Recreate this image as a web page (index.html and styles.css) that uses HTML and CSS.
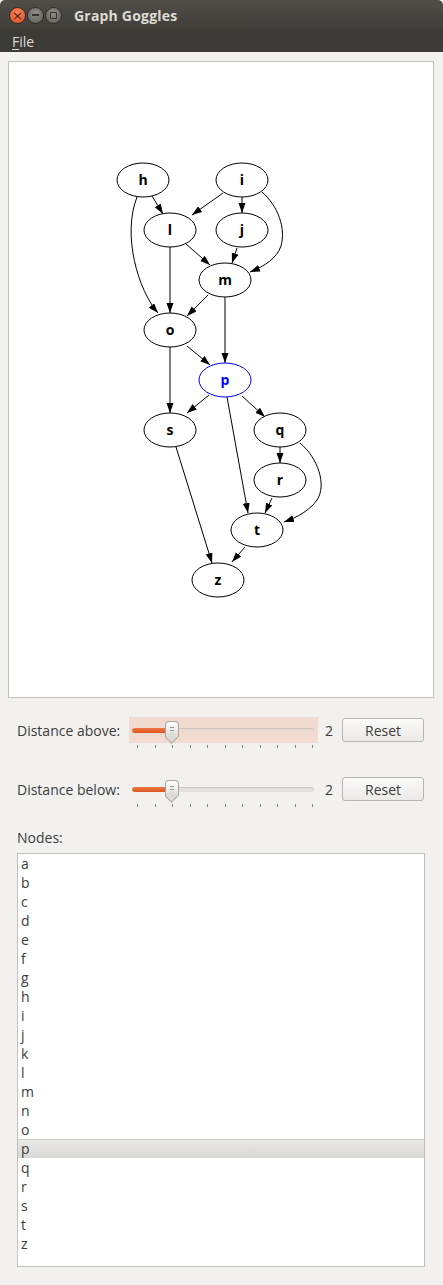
FILE: index.html
```html
<!DOCTYPE html>
<html lang="en">
  <head>
    <meta charset="UTF-8" />
    <title>Graph Goggles</title>
    <link rel="stylesheet" href="styles.css">
  </head>
  <body>
    <div class="window">
      <!-- Title bar with window buttons -->
      <header class="titlebar">
        <div class="win-buttons">
          <span class="win-btn close">&#215;</span>
          <span class="win-btn minimize"><i class="min-bar"></i></span>
          <span class="win-btn maximize"><i class="max-box"></i></span>
        </div>
        <span class="title">Graph Goggles</span>
      </header>

      <nav class="menubar">
        <span class="menu-item"><u>F</u>ile</span>
      </nav>

      <main class="content">
        <!-- Graph view -->
        <div class="graph-frame">
          <svg class="graph" width="424" height="635" viewBox="9 62 424 635">
            <defs>
              <marker id="arrow" markerUnits="userSpaceOnUse" markerWidth="10" markerHeight="8"
                      refX="10" refY="3.5" orient="auto">
                <path d="M0,0 L10,3.5 L0,7 z" fill="#000" />
              </marker>
            </defs>

            <g class="edges" marker-end="url(#arrow)">
              <path d="M152,196 L163,214" />
              <path d="M137,197 C122,235 138,290 158,313" />
              <path d="M223,193 L192,215" />
              <path d="M242,197 L242,213" />
              <path d="M262,192 C278,206 286,228 281,246 C277,258 265,266 250,272" />
              <path d="M186,244 L210,265" />
              <path d="M170,247 L170,313" />
              <path d="M237,248 L232,263" />
              <path d="M208,295 L187,316" />
              <path d="M225,297 L225,363" />
              <path d="M187,346 L210,365" />
              <path d="M170,347 L170,413" />
              <path d="M209,395 L187,413" />
              <path d="M242,396 L265,417" />
              <path d="M227,397 L248,513" />
              <path d="M280,447 L280,463" />
              <path d="M300,443 C318,458 327,485 317,500 C310,510 298,517 284,522" />
              <path d="M272,498 L265,513" />
              <path d="M176,447 L212,563" />
              <path d="M245,547 L232,562" />
            </g>

            <g class="nodes">
              <ellipse cx="143" cy="180" rx="26" ry="17" /><text x="143" y="185">h</text>
              <ellipse cx="242" cy="180" rx="26" ry="17" /><text x="242" y="185">i</text>
              <ellipse cx="170" cy="230" rx="26" ry="17" /><text x="170" y="235">l</text>
              <ellipse cx="242" cy="230" rx="26" ry="17" /><text x="242" y="235">j</text>
              <ellipse cx="225" cy="280" rx="26" ry="17" /><text x="225" y="285">m</text>
              <ellipse cx="170" cy="330" rx="26" ry="17" /><text x="170" y="335">o</text>
              <ellipse class="current" cx="225" cy="380" rx="26" ry="17" /><text class="current" x="225" y="385">p</text>
              <ellipse cx="170" cy="430" rx="26" ry="17" /><text x="170" y="435">s</text>
              <ellipse cx="280" cy="430" rx="26" ry="17" /><text x="280" y="435">q</text>
              <ellipse cx="280" cy="480" rx="26" ry="17" /><text x="280" y="485">r</text>
              <ellipse cx="257" cy="530" rx="26" ry="17" /><text x="257" y="535">t</text>
              <ellipse cx="218" cy="580" rx="26" ry="17" /><text x="218" y="585">z</text>
            </g>
          </svg>
        </div>

        <!-- Distance controls -->
        <div class="distance-row">
          <span class="distance-label">Distance above:</span>
          <div class="slider-box">
            <div class="slider hot" style="--pos: 0.2">
              <div class="groove"><div class="groove-fill"></div></div>
              <div class="thumb"><i></i><i></i><i></i></div>
            </div>
            <div class="ticks">
              <span></span><span></span><span></span><span></span><span></span><span></span>
              <span></span><span></span><span></span><span></span><span></span>
            </div>
          </div>
          <span class="distance-value">2</span>
          <button class="reset-btn">Reset</button>
        </div>

        <div class="distance-row">
          <span class="distance-label">Distance below:</span>
          <div class="slider-box">
            <div class="slider" style="--pos: 0.2">
              <div class="groove"><div class="groove-fill"></div></div>
              <div class="thumb"><i></i><i></i><i></i></div>
            </div>
            <div class="ticks">
              <span></span><span></span><span></span><span></span><span></span><span></span>
              <span></span><span></span><span></span><span></span><span></span>
            </div>
          </div>
          <span class="distance-value">2</span>
          <button class="reset-btn">Reset</button>
        </div>

        <!-- Node list -->
        <div class="nodes-label">Nodes:</div>
        <ul class="node-list">
          <li>a</li><li>b</li><li>c</li><li>d</li><li>e</li><li>f</li><li>g</li>
          <li>h</li><li>i</li><li>j</li><li>k</li><li>l</li><li>m</li><li>n</li>
          <li>o</li><li class="selected">p</li><li>q</li><li>r</li><li>s</li><li>t</li>
          <li>z</li>
        </ul>
      </main>
    </div>
  </body>
</html>
```

FILE: styles.css
```css
/* Base page */
body {
  margin: 0;
  background-color: #f2f1f0;
  font-family: "Open Sans", "DejaVu Sans", sans-serif;
  font-size: 14px;
  color: #3c3c3c;
}

.window {
  width: 443px;
  height: 1285px;
  background-color: #f2f1f0;
  overflow: hidden;
}

/* Title bar */
.titlebar {
  height: 30px;
  display: flex;
  align-items: center;
  background: linear-gradient(#4f4e49, #3e3d39);
  border-radius: 5px 5px 0 0;
}

.win-buttons {
  display: flex;
  align-items: center;
  gap: 1px;
  margin-left: 9px;
}

.win-btn {
  width: 17px;
  height: 17px;
  border-radius: 50%;
  display: flex;
  align-items: center;
  justify-content: center;
  box-sizing: border-box;
  border: 1px solid #2e2d2a;
}

.win-btn.close {
  background: radial-gradient(circle at 50% 35%, #f6875c, #df4a1b);
  color: #4a1a08;
  font-size: 13px;
  line-height: 1;
  font-family: "DejaVu Sans", sans-serif;
}

.win-btn.minimize,
.win-btn.maximize {
  background: radial-gradient(circle at 50% 35%, #8d8c86, #5e5d58);
}

.min-bar {
  width: 7px;
  height: 2px;
  background-color: #34332f;
}

.max-box {
  width: 5px;
  height: 5px;
  border: 1.5px solid #34332f;
  border-radius: 1px;
}

.title {
  margin-left: 12px;
  font-weight: bold;
  font-size: 14px;
  color: #dfdbd2;
  letter-spacing: 0.2px;
}

/* Menu bar */
.menubar {
  height: 22px;
  display: flex;
  align-items: center;
  background-color: #3c3b37;
}

.menu-item {
  margin-left: 12px;
  color: #dfdbd2;
  font-size: 14px;
}

.menu-item u {
  text-underline-offset: 2px;
}

/* Main content */
.content {
  padding: 9px 9px 0 8px;
}

.graph-frame {
  height: 635px;
  background-color: #fff;
  border: 1px solid #c3c0bb;
}

.graph {
  display: block;
}

.edges path {
  fill: none;
  stroke: #000;
  stroke-width: 1;
}

.nodes ellipse {
  fill: #fff;
  stroke: #000;
  stroke-width: 1;
}

.nodes text {
  font-family: "Open Sans", "DejaVu Sans", sans-serif;
  font-weight: bold;
  font-size: 14px;
  text-anchor: middle;
  fill: #000;
}

.nodes .current {
  stroke: #0000ff;
}

.nodes text.current {
  fill: #0000ff;
  stroke: none;
}

/* Distance slider rows */
.distance-row {
  display: flex;
  align-items: flex-start;
  margin-left: 9px;
  margin-top: 19px;
}

.distance-row + .distance-row {
  margin-top: 28px;
}

.distance-label {
  width: 112px;
  line-height: 26px;
  padding-top: 1px;
  white-space: nowrap;
}

.slider-box {
  width: 189px;
}

.slider {
  position: relative;
  height: 26px;
  display: flex;
  align-items: center;
}

.slider.hot {
  background-color: #f1dbd0;
}

.groove {
  flex: 1;
  margin: 0 4px 0 3px;
  height: 5px;
  margin-top: 1px;
  border-radius: 3px;
  background-color: #e3e0dd;
  box-shadow: inset 0 1px 1px rgba(0, 0, 0, 0.12);
  overflow: hidden;
}

.slider.hot .groove {
  background-color: #eadbd3;
}

.groove-fill {
  width: calc(3px + var(--pos) * 175px);
  height: 100%;
  background: linear-gradient(#f07746, #dc5420);
  border-radius: 3px;
}

/* Thumb sits over the groove */
.thumb {
  position: absolute;
  top: 4px;
  left: calc(8px + var(--pos) * 175px - 7px);
  width: 12px;
  height: 15px;
  display: flex;
  flex-direction: column;
  align-items: center;
  justify-content: center;
  gap: 1px;
  background: linear-gradient(#ffffff, #dddbd8);
  border: 1px solid #a9a6a1;
  border-bottom: none;
  border-radius: 4px 4px 0 0;
}

.thumb::after {
  content: "";
  position: absolute;
  left: 1px;
  bottom: -5px;
  width: 8px;
  height: 8px;
  background: #dddbd8;
  border-right: 1px solid #a9a6a1;
  border-bottom: 1px solid #a9a6a1;
  transform: rotate(45deg);
}

.thumb i {
  width: 4px;
  height: 1px;
  background-color: #9a9792;
  margin-top: 1px;
}

.ticks {
  display: flex;
  justify-content: space-between;
  width: 176px;
  margin: 2px 0 0 8px;
  height: 3px;
}

.ticks span {
  width: 1px;
  height: 3px;
  background-color: #8a8782;
}

.distance-value {
  width: 24px;
  padding-left: 7px;
  box-sizing: border-box;
  line-height: 26px;
  padding-top: 1px;
}

.reset-btn {
  width: 82px;
  height: 24px;
  margin: 1px 0 0 0;
  font-family: inherit;
  font-size: 14px;
  color: #3c3c3c;
  background: linear-gradient(#fbfbfa, #ebe9e7);
  border: 1px solid #b8b4ae;
  border-radius: 3px;
  padding: 0;
}

/* Node list */
.nodes-label {
  margin: 22px 0 0 9px;
  line-height: 18px;
}

.node-list {
  list-style: none;
  margin: 6px 0 0 9px;
  padding: 0;
  width: 406px;
  height: 412px;
  background-color: #fff;
  border: 1px solid #c3c0bb;
}

.node-list li {
  height: 19px;
  line-height: 19px;
  padding-left: 3px;
  box-sizing: border-box;
}

.node-list li.selected {
  background: linear-gradient(#e9e8e6, #d9d8d6);
  border-top: 1px solid #cfcdca;
  line-height: 17px;
}
```
